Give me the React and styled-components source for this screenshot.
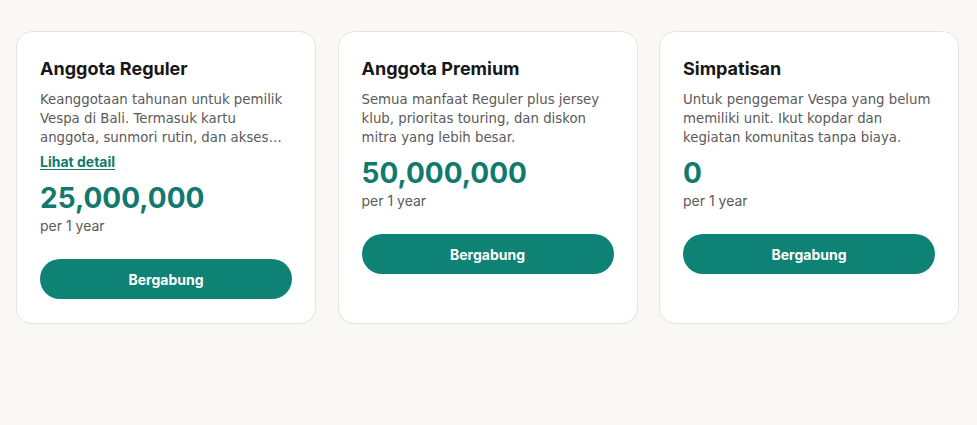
import styled, { createGlobalStyle } from 'styled-components'

const GlobalStyle = createGlobalStyle`
  body {
    margin: 0;
    background: #f9f8f5;
    font-family: Inter, "Liberation Sans", sans-serif;
  }
`

const plans = [
  {
    name: 'Anggota Reguler',
    desc: 'Keanggotaan tahunan untuk pemilik Vespa di Bali. Termasuk kartu anggota, sunmori rutin, dan akses…',
    detail: true,
    price: '25,000,000',
  },
  {
    name: 'Anggota Premium',
    desc: 'Semua manfaat Reguler plus jersey klub, prioritas touring, dan diskon mitra yang lebih besar.',
    price: '50,000,000',
  },
  {
    name: 'Simpatisan',
    desc: 'Untuk penggemar Vespa yang belum memiliki unit. Ikut kopdar dan kegiatan komunitas tanpa biaya.',
    price: '0',
  },
]

function App() {
  return (
    <Page>
      <GlobalStyle />
      <Grid>
        {plans.map(plan => (
          <Card key={plan.name}>
            <Title>{plan.name}</Title>
            <Desc>{plan.desc}</Desc>
            {plan.detail && <DetailLink href="#">Lihat detail</DetailLink>}
            <Price>{plan.price}</Price>
            <Period>per 1 year</Period>
            <JoinButton>Bergabung</JoinButton>
          </Card>
        ))}
      </Grid>
    </Page>
  )
}

export default App

const Page = styled.div`
  min-height: 100vh;
  padding: 31px 18px 0 16px;
  box-sizing: border-box;
`

const Grid = styled.div`
  display: grid;
  grid-template-columns: repeat(3, 1fr);
  gap: 21.5px;
`

const Card = styled.div`
  display: flex;
  flex-direction: column;
  align-items: flex-start;
  background: #fff;
  border: 1px solid #e6e4df;
  border-radius: 16px;
  padding: 25px 23px 24px;
`

const Title = styled.h3`
  margin: 0;
  font-size: 18px;
  line-height: 24px;
  font-weight: 700;
  color: #171717;
`

const Desc = styled.p`
  margin: 9px 0 0;
  font-family: "DejaVu Sans", Inter, sans-serif;
  font-size: 13.3px;
  line-height: 19px;
  color: #5a5a5a;
`

const DetailLink = styled.a`
  margin-top: 5px;
  font-size: 14px;
  line-height: 20px;
  font-weight: 700;
  color: #11796e;
  text-decoration: underline;
  text-underline-offset: 2px;
`

const Price = styled.div`
  margin-top: 9px;
  font-size: 28px;
  line-height: 34px;
  font-weight: 700;
  color: #11796e;
`

const Period = styled.div`
  margin-top: 1px;
  font-size: 14px;
  line-height: 20px;
  color: #5a5a5a;
`

const JoinButton = styled.button`
  margin-top: 23px;
  width: 100%;
  height: 40px;
  border: none;
  border-radius: 20px;
  background: #0e8275;
  color: #fff;
  font-family: inherit;
  font-size: 14px;
  font-weight: 700;
  cursor: pointer;
`
